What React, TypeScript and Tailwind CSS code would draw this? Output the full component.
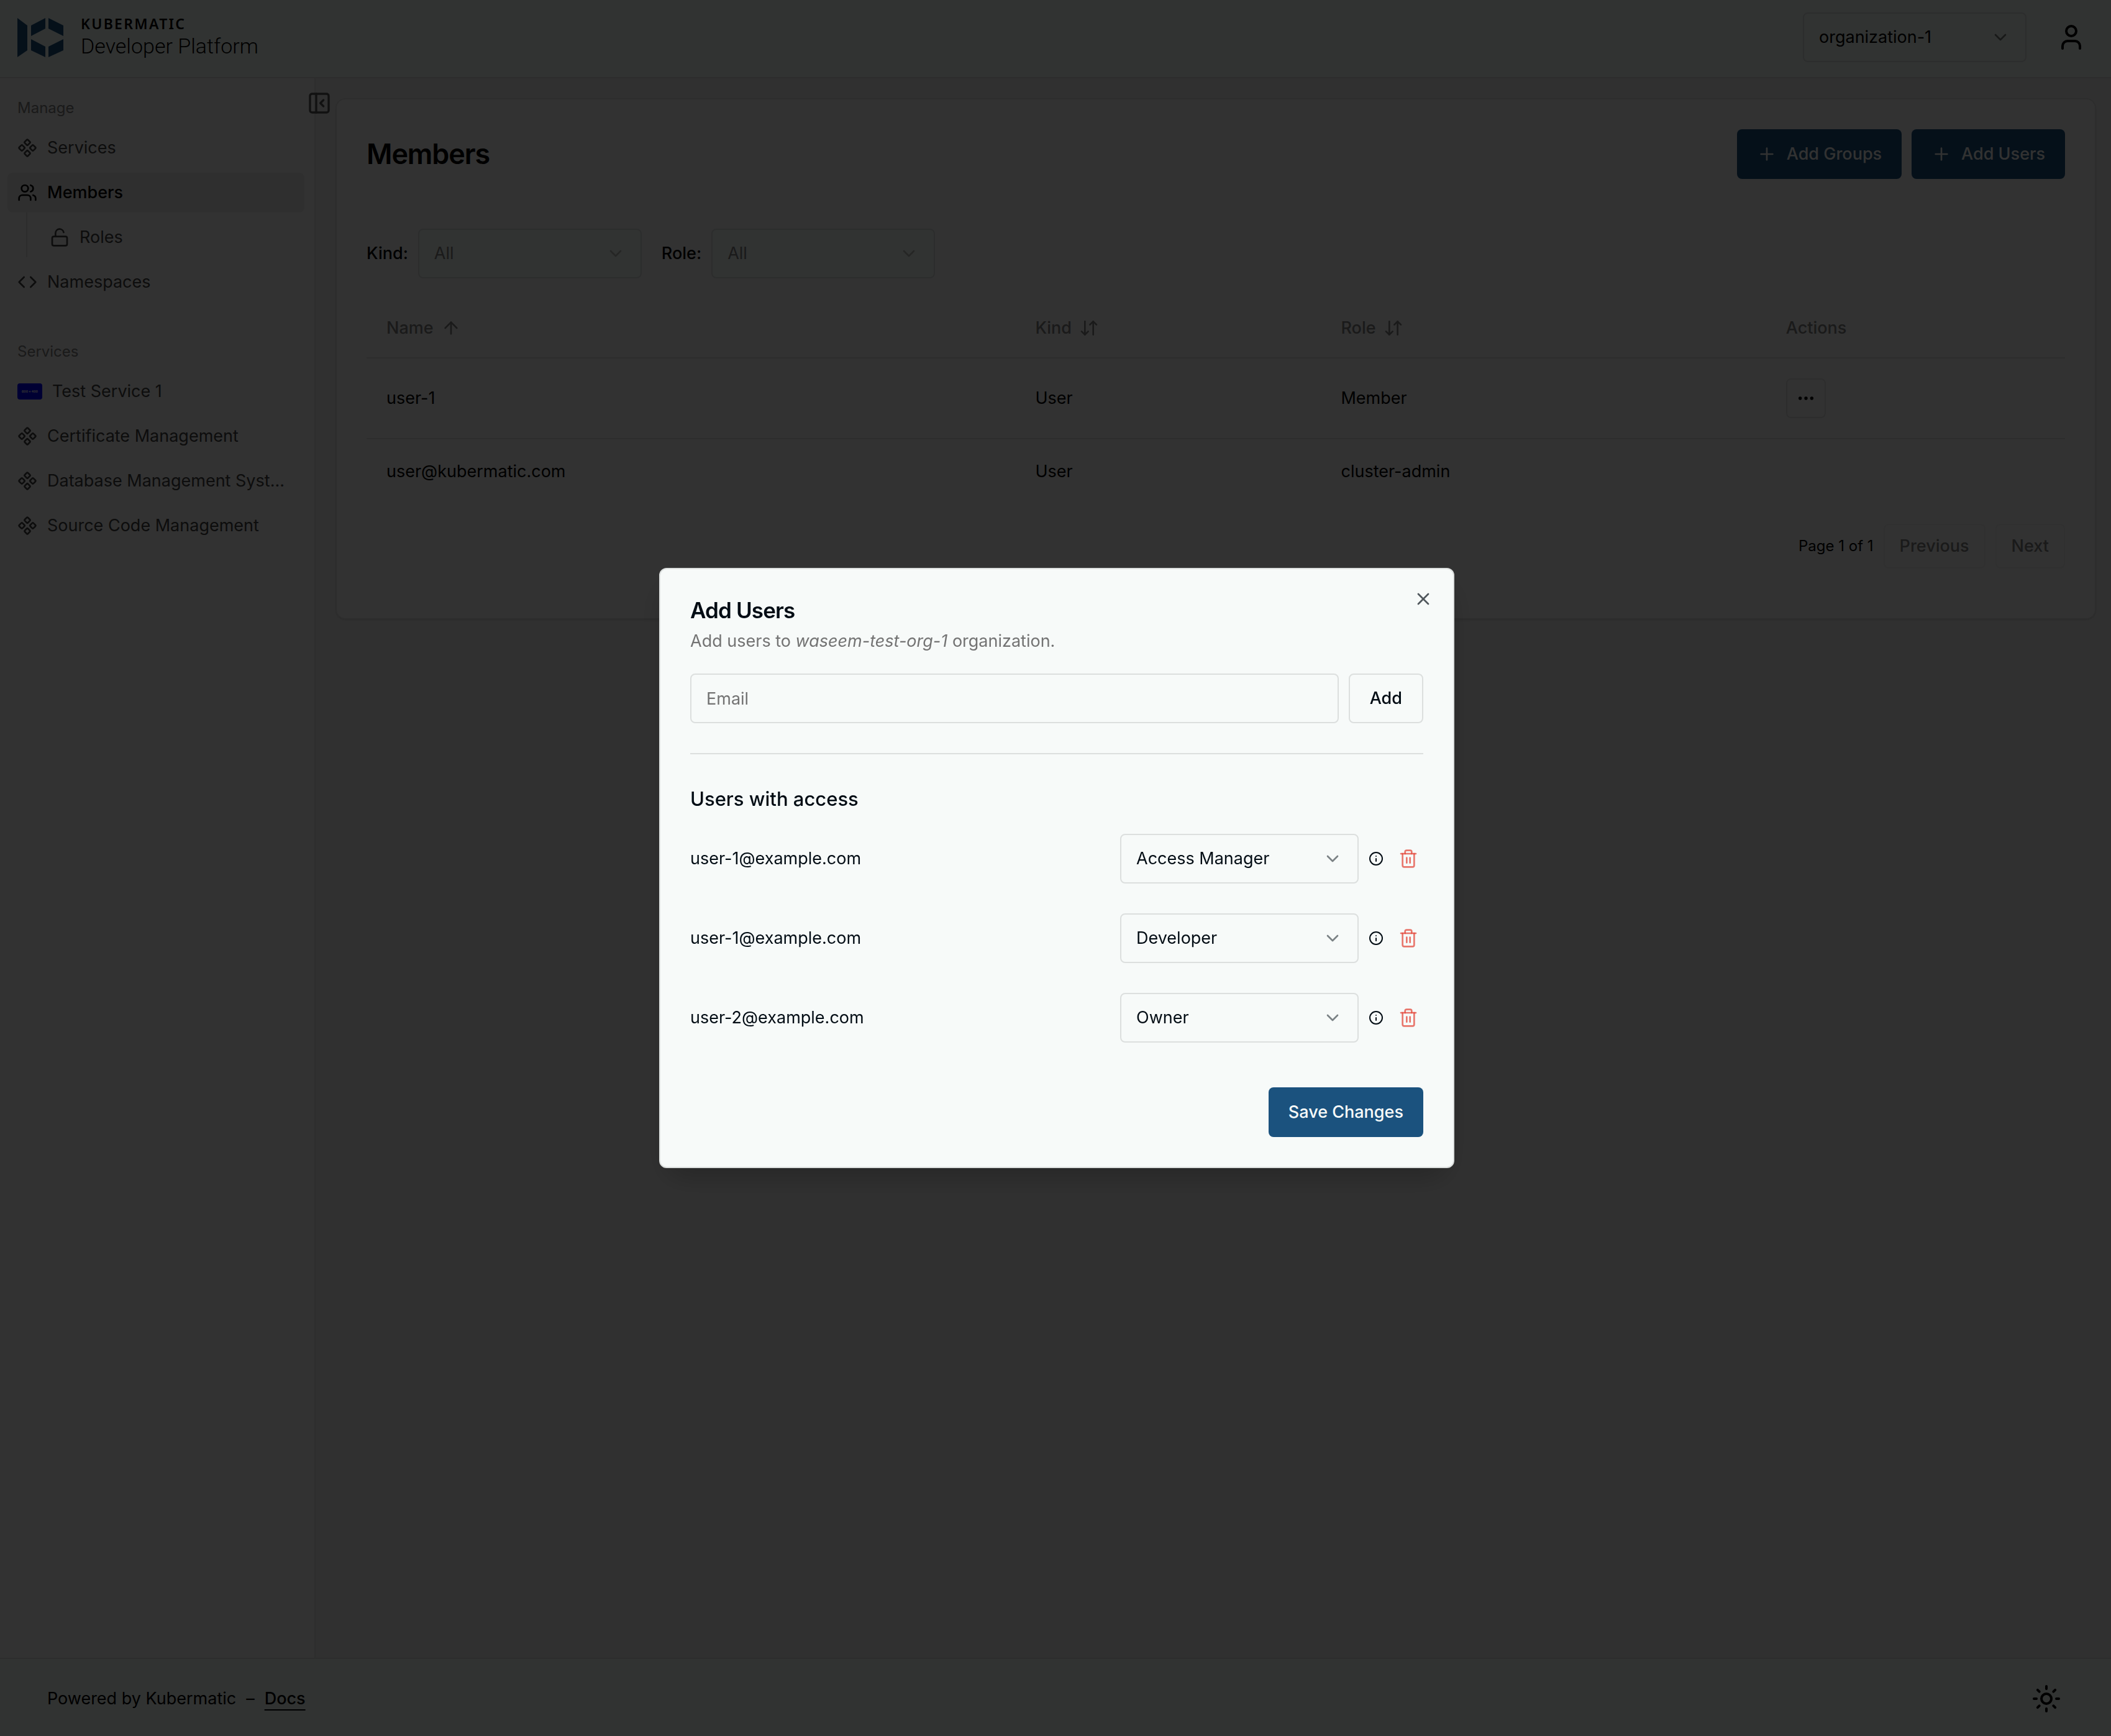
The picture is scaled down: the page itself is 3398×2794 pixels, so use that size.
import { useId } from "react";
import type { ReactNode } from "react";
import {
  ArrowDownUp,
  ArrowUp,
  ChevronDown,
  Code,
  Component,
  Ellipsis,
  Info,
  LockOpen,
  PanelLeftClose,
  Plus,
  Sun,
  Trash2,
  User,
  Users,
  X,
} from "lucide-react";

function Logo() {
  return (
    <a href="#home" className="flex items-start gap-7 text-black">
      <svg viewBox="0 0 74 63" className="mt-px h-[63px] w-[74px] fill-[#1b527e]" aria-hidden="true">
        <path d="M0 0 16 12V52L0 63Z" />
        <path d="M22 12 45 0V17L22 29Z" />
        <path d="M50 0 74 12V29L50 17Z" />
        <path d="M22 34 45 46V63L22 52Z" />
        <path d="M74 34 50 46V63L74 52Z" />
      </svg>
      <span className="flex flex-col">
        <span className="font-['Noto_Sans',sans-serif] text-[23px] leading-5 font-semibold tracking-widest">
          KUBERMATIC
        </span>
        <span className="font-['Roboto',sans-serif] text-[34px] leading-[52px] font-light">Developer Platform</span>
      </span>
    </a>
  );
}

function Select({
  label,
  value,
  className,
}: {
  label: string;
  value: string;
  className: string;
}) {
  return (
    <span className={"relative block h-20 shrink-0 rounded-lg " + className}>
      <select
        aria-label={label}
        defaultValue={value}
        className="h-full w-full appearance-none rounded-lg border-2 border-[#dcdfde] bg-transparent pr-16 pl-6"
      >
        <option>{value}</option>
      </select>
      <ChevronDown className="pointer-events-none absolute top-6 right-[26px] size-8 opacity-50" />
    </span>
  );
}

function NavItem({
  icon,
  children,
  active = false,
}: {
  icon: ReactNode;
  children: ReactNode;
  active?: boolean;
}) {
  return (
    <a
      href="#nav"
      aria-current={active ? "page" : undefined}
      className={
        "flex h-16 items-center gap-4 rounded-lg px-4 whitespace-nowrap " +
        (active ? "bg-[#ebebeb] font-medium text-black" : "text-[#404040]")
      }
    >
      {icon}
      <span>{children}</span>
    </a>
  );
}

function GroupLabel({ children }: { children: ReactNode }) {
  return <h2 className="flex h-16 items-center px-4 text-2xl text-[#808080]">{children}</h2>;
}

function Sidebar() {
  return (
    <nav className="relative w-[508px] shrink-0 border-r-2 border-[#e0e0e0] bg-[#fafafa] pt-4 pr-4 pl-3">
      <GroupLabel>Manage</GroupLabel>
      <div className="flex flex-col gap-2">
        <NavItem icon={<Component className="size-8 shrink-0" />}>Services</NavItem>
        <NavItem active icon={<Users className="size-8 shrink-0" />}>
          Members
        </NavItem>
        <div className="-mt-2 ml-[30px] border-l-2 border-[#e0e0e0] pt-2 pl-5">
          <NavItem icon={<LockOpen className="size-8 shrink-0" />}>Roles</NavItem>
        </div>
        <NavItem icon={<Code className="size-8 shrink-0" />}>Namespaces</NavItem>
      </div>
      <div className="mt-12">
        <GroupLabel>Services</GroupLabel>
        <div className="flex flex-col gap-2">
          <NavItem
            icon={
              <span className="flex h-[26px] w-10 shrink-0 items-center justify-center rounded bg-[#0000ff] text-[5px] leading-none font-bold whitespace-nowrap text-white">
                600 × 400
              </span>
            }
          >
            Test Service 1
          </NavItem>
          <NavItem icon={<Component className="size-8 shrink-0" />}>Certificate Management</NavItem>
          <NavItem icon={<Component className="size-8 shrink-0" />}>Database Management Syst...</NavItem>
          <NavItem icon={<Component className="size-8 shrink-0" />}>Source Code Management</NavItem>
        </div>
      </div>
      <button type="button" aria-label="Collapse sidebar" className="absolute top-5 -right-7 text-[#555]">
        <PanelLeftClose className="size-10" />
      </button>
    </nav>
  );
}

function PrimaryButton({ children }: { children: ReactNode }) {
  return (
    <button
      type="button"
      className="flex h-20 items-center gap-4 rounded-lg bg-[#1b527e] px-8 font-medium text-[#f7faf9]"
    >
      {children}
    </button>
  );
}

function MembersCard() {
  return (
    <section className="rounded-2xl border-2 border-[#e0e0e0] bg-[#fafafa] p-12 pb-20 shadow-sm">
      <div className="flex h-20 items-center justify-between">
        <h1 className="text-[45px] leading-12 font-semibold tracking-tight">Members</h1>
        <div className="flex gap-4">
          <PrimaryButton>
            <Plus className="size-8" />
            Add Groups
          </PrimaryButton>
          <PrimaryButton>
            <Plus className="size-8" />
            Add Users
          </PrimaryButton>
        </div>
      </div>

      <div className="mt-20 flex items-center gap-8">
        {["Kind", "Role"].map((name) => (
          <div key={name} className="flex items-center gap-4">
            <span className="font-medium">{name}:</span>
            <Select label={name} value="All" className="w-[360px] bg-[#f5fcf8] text-[#808080]" />
          </div>
        ))}
      </div>

      <table className="mt-8 w-full table-fixed border-separate border-spacing-0 text-left">
        <thead>
          <tr className="h-[97px] text-[#808080] *:border-b-2 *:border-[#dedede] *:px-8 *:font-medium">
            <th className="w-[38.2%]">
              <button type="button" className="flex items-center gap-3">
                Name <ArrowUp className="size-8" />
              </button>
            </th>
            <th className="w-[18%]">
              <button type="button" className="flex items-center gap-3">
                Kind <ArrowDownUp className="size-8" />
              </button>
            </th>
            <th className="w-[26.2%]">
              <button type="button" className="flex items-center gap-3">
                Role <ArrowDownUp className="size-8" />
              </button>
            </th>
            <th>Actions</th>
          </tr>
        </thead>
        <tbody>
          <tr className="*:border-b-2 *:border-[#dedede] *:p-8">
            <td>user-1</td>
            <td>User</td>
            <td>Member</td>
            <td>
              <button
                type="button"
                aria-label="Actions for user-1"
                className="flex size-16 items-center justify-center rounded-lg border-2 border-[#e0e0e0]"
              >
                <Ellipsis className="size-8" />
              </button>
            </td>
          </tr>
          <tr className="*:p-8">
            <td>user@kubermatic.com</td>
            <td>User</td>
            <td>cluster-admin</td>
            <td />
          </tr>
        </tbody>
      </table>

      <div className="mt-8 flex items-center justify-end gap-4">
        <span className="text-2xl">Page 1 of 1</span>
        {["Previous", "Next"].map((name) => (
          <button
            key={name}
            type="button"
            disabled
            className="h-18 rounded-lg border-2 border-[#ededed] px-6 font-medium text-[#808080]"
          >
            {name}
          </button>
        ))}
      </div>
    </section>
  );
}

const access = [
  { email: "user-1@example.com", role: "Access Manager" },
  { email: "user-1@example.com", role: "Developer" },
  { email: "user-2@example.com", role: "Owner" },
];

function AddUsersDialog() {
  const titleId = useId();
  return (
    <div className="fixed inset-0 flex items-center justify-center bg-black/80 pl-1">
      <div
        role="dialog"
        aria-modal="true"
        aria-labelledby={titleId}
        className="relative w-full max-w-[1280px] rounded-xl border-2 border-[#dcdfde] bg-[#f7faf9] p-12 text-[#020c14] shadow-2xl"
      >
        <h2 id={titleId} className="text-[35px] leading-9 font-semibold tracking-tight">
          Add Users
        </h2>
        <p className="mt-3 text-[#737373]">
          Add users to <em>waseem-test-org-1</em> organization.
        </p>
        <button type="button" aria-label="Close" className="absolute top-8 right-8 text-[#50575c]">
          <X className="size-8" />
        </button>

        <form className="mt-8 flex gap-4">
          <input
            type="email"
            aria-label="Email"
            placeholder="Email"
            className="h-20 min-w-0 flex-1 rounded-lg border-2 border-[#dcdfde] px-6 placeholder:text-[#737373]"
          />
          <button type="button" className="h-20 rounded-lg border-2 border-[#dcdfde] px-8 font-medium">
            Add
          </button>
        </form>

        <hr className="mt-12 border-t-2 border-[#dcdfde]" />

        <h3 className="mt-12 text-[31px] leading-12 font-medium">Users with access</h3>
        <ul className="mt-8 flex flex-col gap-12">
          {access.map((row, i) => (
            <li key={i} className="flex items-center">
              <span className="flex-1">{row.email}</span>
              <Select label={"Role of " + row.email} value={row.role} className="w-96" />
              <Info className="ml-4 size-6" />
              <button
                type="button"
                aria-label={"Remove " + row.email}
                className="ml-4 flex size-12 items-center justify-center text-[#e3493c]/75"
              >
                <Trash2 className="size-8" />
              </button>
            </li>
          ))}
        </ul>

        <div className="mt-18 flex justify-end">
          <PrimaryButton>Save Changes</PrimaryButton>
        </div>
      </div>
    </div>
  );
}

export default function App() {
  return (
    <div className="flex min-h-screen flex-col bg-[#f1f1f1] font-['Inter',sans-serif] text-[27px] leading-10 text-black">
      <header className="flex items-start justify-between border-b-2 border-[#e0e0e0] bg-[#f5fcf8] pt-5 pr-10 pb-6 pl-7">
        <div className="pt-2">
          <Logo />
        </div>
        <div className="flex items-center gap-12">
          <Select label="Organization" value="organization-1" className="w-[360px]" />
          <button type="button" aria-label="Account">
            <User className="size-12" />
          </button>
        </div>
      </header>

      <div className="flex flex-1">
        <Sidebar />
        <main className="min-w-0 flex-1 py-8 pr-6 pl-8">
          <MembersCard />
        </main>
      </div>

      <footer className="flex items-center justify-between border-t-2 border-[#e0e0e0] bg-[#f5fcf8] pt-10 pr-20 pb-9 pl-19">
        <p className="flex gap-4">
          <span>Powered by Kubermatic</span>
          <span>–</span>
          <a href="#docs" className="font-medium underline decoration-2 underline-offset-8">
            Docs
          </a>
        </p>
        <button type="button" aria-label="Toggle theme">
          <Sun className="size-12" />
        </button>
      </footer>

      <AddUsersDialog />
    </div>
  );
}
